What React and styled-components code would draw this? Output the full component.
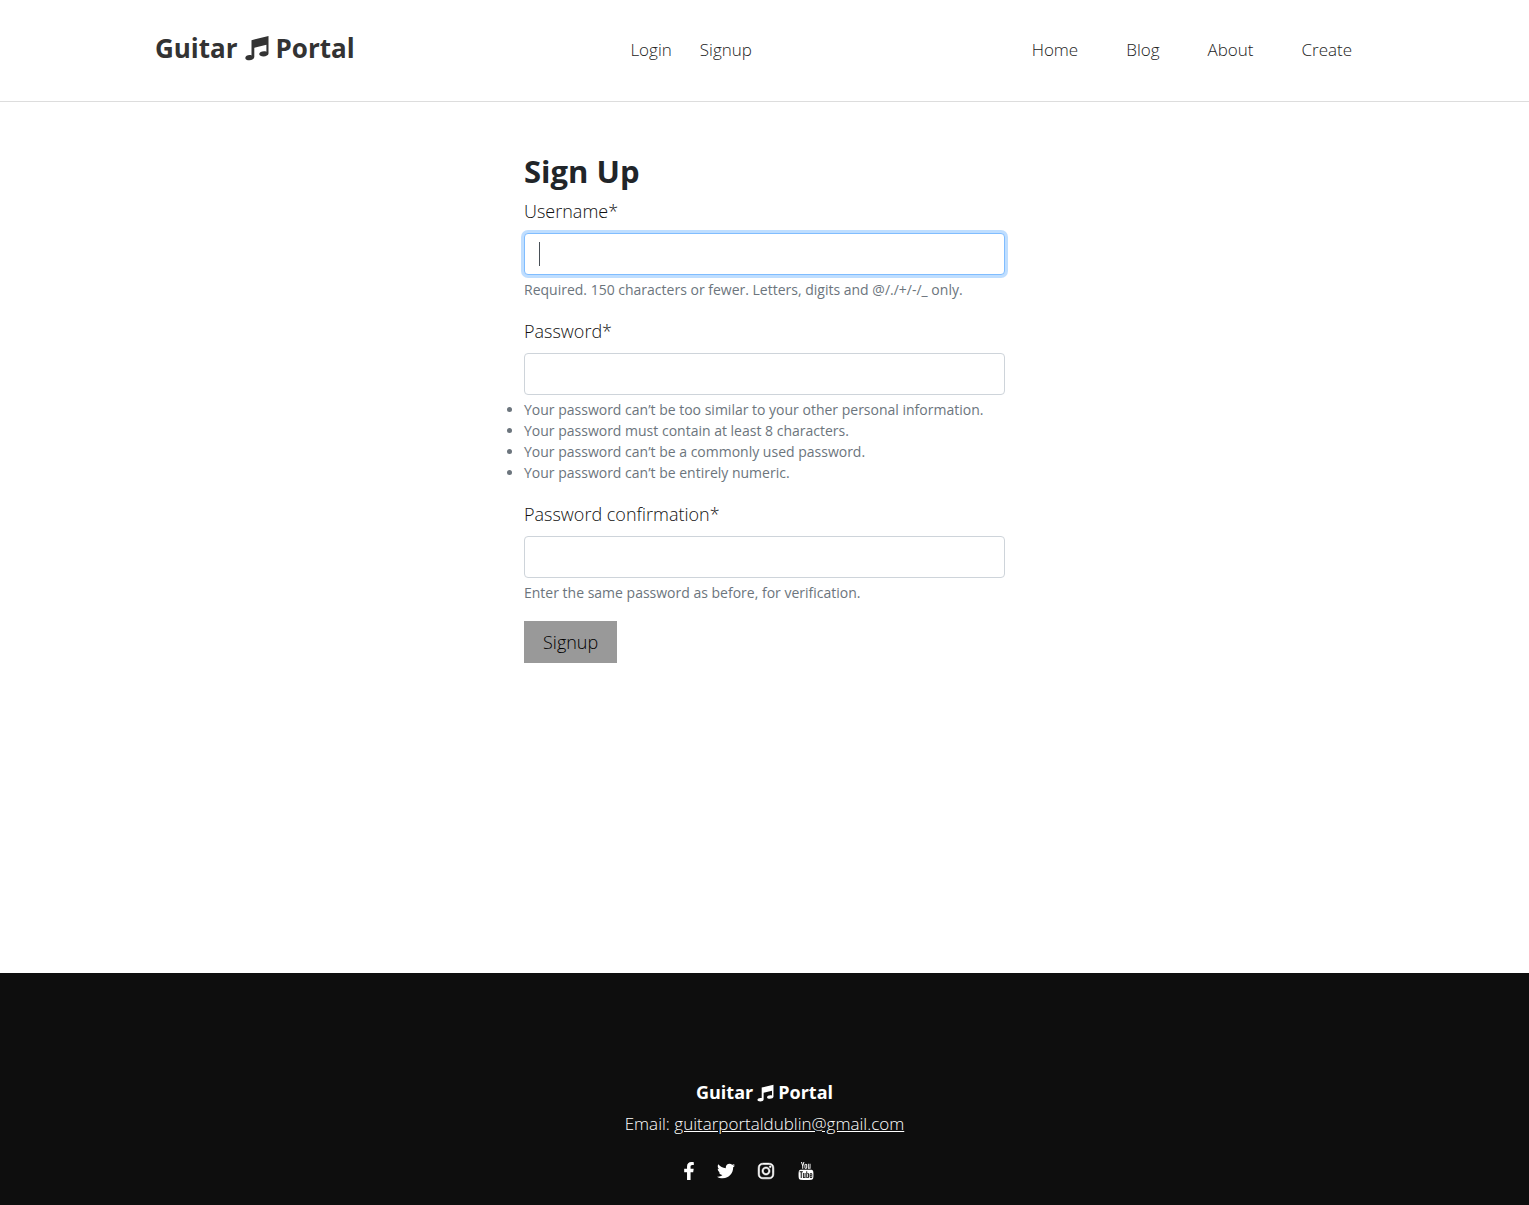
import React from "react";
import styled, { createGlobalStyle } from "styled-components";
import { FaFacebookF, FaTwitter, FaInstagram } from "react-icons/fa";
import { TfiYoutube } from "react-icons/tfi";

const GlobalStyle = createGlobalStyle`
  *, *::before, *::after { box-sizing: border-box; }
  body {
    margin: 0;
    background: #fff;
    color: #212529;
    font-family: "Open Sans", "Noto Sans", sans-serif;
    font-weight: 300;
    font-size: 18px;
    line-height: 27px;
  }
`;

const Page = styled.div`
  min-height: 100vh;
  display: flex;
  flex-direction: column;
`;

const Header = styled.header`
  display: flex;
  align-items: center;
  justify-content: space-between;
  padding: 31px 10% 34px;
  border-bottom: 1px solid #ddd;
`;

const Brand = styled.a`
  display: inline-flex;
  align-items: center;
  gap: ${(p) => (p.$large ? "7px" : "4px")};
  padding: ${(p) => (p.$large ? "0 20px 2px 2px" : "0")};
  color: ${(p) => (p.$large ? "#333" : "#fff")};
  font-size: ${(p) => (p.$large ? "26px" : "18px")};
  line-height: ${(p) => (p.$large ? "34px" : "27px")};
  font-weight: 700;
  text-decoration: none;
`;

const NoteSvg = styled.svg`
  width: ${(p) => (p.$large ? "24px" : "17px")};
  height: ${(p) => (p.$large ? "26px" : "18px")};
  fill: currentColor;
`;

const Nav = styled.nav`
  display: flex;
`;

const NavLink = styled.a`
  padding: 4px ${(p) => (p.$wide ? "24px" : "14px")};
  color: #222;
  font-size: 17px;
  text-decoration: none;
`;

const Main = styled.main`
  flex: 1;
  width: 100%;
  max-width: 511px;
  margin: 0 auto;
  padding: 49px 15px;
`;

const Title = styled.h1`
  margin: 0 0 7px;
  font-size: 31px;
  line-height: 40px;
  font-weight: 700;
`;

const Field = styled.div`
  margin-bottom: 18px;
`;

const Label = styled.label`
  display: block;
  margin-bottom: 8px;
  color: #111;
`;

const Input = styled.input`
  display: block;
  width: 100%;
  height: 42px;
  padding: 6px 14px;
  border: 1px solid #ced4da;
  border-radius: 4px;
  background: #fff;
  color: #495057;
  font: inherit;
  &:focus {
    border-color: #80bdff;
    outline: 0;
    box-shadow: 0 0 0 3px rgba(0, 123, 255, 0.25);
  }
  /* steady caret while the focused box is empty */
  &:focus:placeholder-shown {
    caret-color: transparent;
    background: linear-gradient(#495057, #495057) 14px 8px / 1px 24px no-repeat #fff;
  }
`;

const Help = styled.small`
  display: block;
  margin-top: 4px;
  color: #6c757d;
  font-size: 14px;
  line-height: 21px;
  font-weight: 400;
`;

const Rules = styled.ul`
  margin: 4px 0 0;
  padding: 0;
  color: #6c757d;
  font-size: 14px;
  line-height: 21px;
  font-weight: 400;
`;

const Submit = styled.button`
  display: block;
  height: 42px;
  padding: 0 19px;
  border: 0;
  background: #999;
  color: #000;
  font: inherit;
`;

const Footer = styled.footer`
  display: flex;
  flex-direction: column;
  align-items: center;
  padding: 106px 15px 24px;
  background: #0e0e0e;
  color: #fff;
`;

const Contact = styled.p`
  margin: 4px 0 0;
  font-size: 17px;
`;

const MailLink = styled.a`
  color: inherit;
  text-decoration: underline;
`;

const Social = styled.nav`
  display: flex;
  gap: 22px;
  margin-top: 24px;
  padding-right: 32px;
`;

const SocialLink = styled.a`
  display: flex;
  align-items: center;
  justify-content: center;
  width: ${(p) => p.$width || "18px"};
  height: 20px;
  color: #fff;
  font-size: 18px;
`;

function Note({ large }) {
  return (
    <NoteSvg $large={large} viewBox="0 0 24 26" aria-hidden="true">
      <path d="M6.500 5.200 23.500 1v17.500c0 1.700-2.400 2.900-5 2.900-2.400 0-4.300-.8-4.300-2.300 0-1.700 2.300-2.800 4.900-2.800.9 0 1.700.1 2.300.4V9.800L9.300 12.800v9.300c0 2-2.300 3.200-4.900 3.200C2 25.300.3 24.300.3 22.900c0-1.700 2.100-2.800 4.300-2.800.8 0 1.400.1 1.900.3Z" />
    </NoteSvg>
  );
}

function Logo({ large }) {
  return (
    <Brand href="#" $large={large}>
      <span>Guitar</span>
      <Note large={large} />
      <span>Portal</span>
    </Brand>
  );
}

export default function App() {
  return (
    <Page>
      <GlobalStyle />
      <Header>
        <Logo large />
        <Nav aria-label="Account">
          <NavLink href="#login">Login</NavLink>
          <NavLink href="#signup">Signup</NavLink>
        </Nav>
        <Nav aria-label="Main">
          {["Home", "Blog", "About", "Create"].map((name) => (
            <NavLink key={name} $wide href={`#${name.toLowerCase()}`}>
              {name}
            </NavLink>
          ))}
        </Nav>
      </Header>
      <Main>
        <Title>Sign Up</Title>
        <form onSubmit={(e) => e.preventDefault()}>
          <Field>
            <Label htmlFor="username">Username*</Label>
            <Input id="username" type="text" placeholder=" " autoFocus />
            <Help>Required. 150 characters or fewer. Letters, digits and @/./+/-/_ only.</Help>
          </Field>
          <Field>
            <Label htmlFor="password">Password*</Label>
            <Input id="password" type="password" />
            <Rules>
              <li>Your password can’t be too similar to your other personal information.</li>
              <li>Your password must contain at least 8 characters.</li>
              <li>Your password can’t be a commonly used password.</li>
              <li>Your password can’t be entirely numeric.</li>
            </Rules>
          </Field>
          <Field>
            <Label htmlFor="confirmation">Password confirmation*</Label>
            <Input id="confirmation" type="password" />
            <Help>Enter the same password as before, for verification.</Help>
          </Field>
          <Submit type="submit">Signup</Submit>
        </form>
      </Main>
      <Footer>
        <Logo />
        <Contact>
          Email: <MailLink href="mailto:guitarportaldublin@gmail.com">guitarportaldublin@gmail.com</MailLink>
        </Contact>
        <Social aria-label="Social media">
          <SocialLink href="#facebook" aria-label="Facebook" $width="12px"><FaFacebookF /></SocialLink>
          <SocialLink href="#twitter" aria-label="Twitter"><FaTwitter /></SocialLink>
          <SocialLink href="#instagram" aria-label="Instagram">
            <FaInstagram stroke="currentColor" strokeWidth="16" />
          </SocialLink>
          <SocialLink href="#youtube" aria-label="YouTube"><TfiYoutube /></SocialLink>
        </Social>
      </Footer>
    </Page>
  );
}
